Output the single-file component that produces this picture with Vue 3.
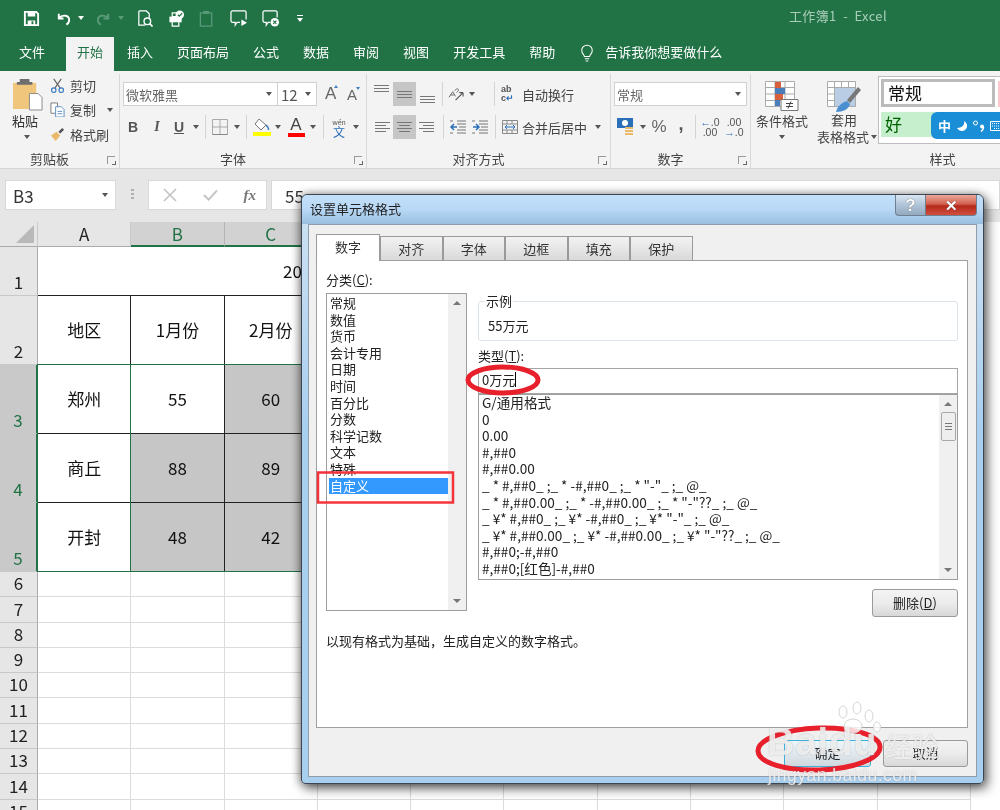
<template>
  <div class="excel">
    <!-- title bar -->
    <header class="qat">
      <svg class="q" viewBox="0 0 18 18"><path d="M2 2h12l2 2v12H2z" fill="none" stroke="#fff" stroke-width="2"/><path d="M5 2h8v5H5zM5 11h8v5H5z" fill="#fff"/><path d="M9 12h2v3H9z" fill="#217346"/></svg>
      <svg class="q undo" viewBox="0 0 18 18"><path d="M4 4v5h5M4 8.500c4-4 11-3 11 2 0 2-1 4-3 5" fill="none" stroke="#fff" stroke-width="2"/></svg>
      <i class="dd white"></i>
      <svg class="q redo" viewBox="0 0 18 18"><path d="M14 4v5H9M14 8.500c-4-4-11-3-11 2 0 2 1 4 3 5" fill="none" stroke="#5a9a78" stroke-width="2"/></svg>
      <i class="dd faded"></i>
      <svg class="q preview" viewBox="0 0 18 18"><path d="M3 1h8l3 3v5M3 1v15h7" fill="none" stroke="#fff" stroke-width="1.300"/><circle cx="12" cy="12" r="3.500" fill="none" stroke="#fff" stroke-width="1.500"/><path d="M14.500 14.500l3 3" stroke="#fff" stroke-width="1.800"/></svg>
      <svg class="q wide printer" viewBox="0 0 20 18"><path d="M3 7h13v6H3z" fill="#fff"/><path d="M6 3h6v4H6zM6 12h7v5H6z" fill="none" stroke="#fff" stroke-width="1.300"/><circle cx="14" cy="5" r="4.500" fill="#fff"/><path d="M12 5l1.500 1.500L16.500 3.500" fill="none" stroke="#217346" stroke-width="1.300"/></svg>
      <svg class="q wide" viewBox="0 0 20 18"><path d="M3 3h12v14H3z" fill="none" stroke="#5a9a78" stroke-width="1.400"/><path d="M6 1h6v3H6z" fill="#5a9a78"/></svg>
      <svg class="q wide" viewBox="0 0 20 18"><path d="M3 1h13a1.500 1.500 0 0 1 1.500 1.500V10M11 13H8l-2 3v-3H3a1.500 1.500 0 0 1-1.500-1.500v-9A1.500 1.500 0 0 1 3 1" fill="none" stroke="#fff" stroke-width="1.300"/><path d="M12.500 10l6 3.500-6 3.500z" fill="#fff"/></svg>
      <svg class="q wide" viewBox="0 0 20 18"><path d="M3 1h12a1.500 1.500 0 0 1 1.500 1.500V8M9 13H7l-2 3v-3H3a1.500 1.500 0 0 1-1.500-1.500v-9A1.500 1.500 0 0 1 3 1" fill="none" stroke="#fff" stroke-width="1.300"/><circle cx="14" cy="13" r="4.500" fill="#fff"/><path d="M12.300 11.300l3.400 3.400M15.700 11.300l-3.400 3.400" stroke="#217346" stroke-width="1.200"/></svg>
      <span class="more"><b></b><i class="dd white"></i></span>
      <span class="doc-title">工作簿1 &nbsp;-&nbsp; Excel</span>
    </header>

    <!-- tabs -->
    <nav class="tabs">
      <span v-for="t in tabs" :key="t" class="tab" :class="{ 'tab--on': t === '开始' }">{{ t }}</span>
      <svg class="bulb" viewBox="0 0 16 20"><path d="M5 13.500c0-2-3-3.500-3-7a6 6 0 0 1 12 0c0 3.500-3 5-3 7zM5.500 16h5M6.500 18.500h3" fill="none" stroke="#fff" stroke-width="1.200"/></svg>
      <span class="tell">告诉我你想要做什么</span>
    </nav>

    <!-- ribbon -->
    <section class="ribbon">
      <div class="group g-clip">
        <div class="clip-body">
          <div class="paste">
            <svg viewBox="0 0 32 34" class="paste-ic"><path d="M1 5h24v27H1z" fill="#f0c67c"/><path d="M8 1h10v3h3v3H5V4h3z" fill="#6f6f6f"/><path d="M18 16h9l4 4v13H18z" fill="#fff" stroke="#8a8a8a"/></svg>
            <span>粘贴</span>
            <i class="dd"></i>
          </div>
          <div class="clip-list">
            <div class="clip-row">
              <svg viewBox="0 0 16 16"><path d="M4 1l7 10M12 1L5 11" stroke="#666" stroke-width="1.300"/><circle cx="4" cy="13" r="2.400" fill="none" stroke="#3f7fbf" stroke-width="1.300"/><circle cx="12" cy="13" r="2.400" fill="none" stroke="#3f7fbf" stroke-width="1.300"/></svg>
              <span>剪切</span>
            </div>
            <div class="clip-row">
              <svg viewBox="0 0 16 16"><path d="M1 1h7v11H1z" fill="#fff" stroke="#777"/><path d="M6 5h6l3 3v8H6z" fill="#fff" stroke="#5b8dbd"/><path d="M8 10h5M8 12.500h5" stroke="#5b8dbd"/></svg>
              <span>复制</span>
              <i class="dd copy-dd"></i>
            </div>
            <div class="clip-row">
              <svg viewBox="0 0 16 16"><path d="M1 9l6-4 4 4-5 6z" fill="#eab96c"/><path d="M9 5l4-4 2 2-4 4z" fill="#555"/></svg>
              <span>格式刷</span>
            </div>
          </div>
        </div>
        <div class="g-label">剪贴板<i class="launch"></i></div>
      </div>

      <div class="group g-font">
        <div class="rows">
          <div class="row">
            <div class="combo font-name"><span>微软雅黑</span><i class="dd"></i></div>
            <div class="combo font-size"><span>12</span><i class="dd"></i></div>
            <span class="grow-a">A<sup class="up"></sup></span>
            <span class="grow-a small">A<sup class="down"></sup></span>
          </div>
          <div class="row row-2 font-tools">
            <b class="rb serif">B</b>
            <i class="rb serif it">I</i>
            <u class="rb u-btn">U</u>
            <i class="dd w14"></i>
            <em class="sep w6"></em>
            <span class="rb w24"><svg viewBox="0 0 16 16" width="16" height="16"><path d="M.500.500h15v15H.500zM8 .500v15M.500 8h15" fill="none" stroke="#aaa"/><path d="M.500 15.500h15" stroke="#888"/></svg></span>
            <i class="dd w10"></i>
            <em class="sep w10"></em>
            <span class="rb w22"><svg viewBox="0 0 18 20" width="18" height="20"><path d="M6 2l7 6-5 5-6-6z" fill="#fff" stroke="#777"/><path d="M13 8c2 2 3 3 2.500 5" fill="none" stroke="#3f7fbf" stroke-width="1.500"/><path d="M0 15h18v4H0z" fill="#ffff00"/></svg></span>
            <i class="dd w10"></i>
            <span class="rb w22 a-red">A</span>
            <i class="dd w12"></i>
            <em class="sep w10"></em>
            <span class="rb w22 wen"><small>wén</small><span>文</span></span>
            <i class="dd w12"></i>
          </div>
        </div>
        <div class="g-label">字体<i class="launch"></i></div>
      </div>

      <div class="group g-align">
        <div class="rows">
          <div class="row">
            <span v-for="(a, i) in alignTop" :key="i" class="al" :class="{ 'al--on': a.on, [a.cls]: true }"><s></s><s></s><s></s></span>
            <em class="sep w6"></em>
            <span class="rb w23"><svg viewBox="0 0 18 16" width="17" height="15"><path d="M1 11l4-6 3 5M2.500 8.500h4M7 4l2-2a1.500 1.500 0 0 1 2 2l-2 2" fill="none" stroke="#666"/><path d="M8 14L16 6M16 6h-4M16 6v4" fill="none" stroke="#555" stroke-width="1.200"/></svg></span>
            <i class="dd w8"></i>
            <em class="sep sep-wrap"></em>
            <span class="wrap-ic">ab<br>c<span>↵</span></span>
            <span class="rt">自动换行</span>
          </div>
          <div class="row row-2">
            <span class="al al-left"><s></s><s></s><s></s><s></s></span>
            <span class="al al-center al--on"><s></s><s></s><s></s><s></s></span>
            <span class="al al-right"><s></s><s></s><s></s><s></s></span>
            <em class="sep w8"></em>
            <span class="rb w22"><svg viewBox="0 0 16 14" width="16" height="14"><path d="M7 1h9M7 4h9M9 7h7M7 10h9M7 13h9M0 1h3M0 13h3" stroke="#777"/><path d="M7 7H1M4 4L1 7l3 3" fill="none" stroke="#2b6fb8" stroke-width="1.500"/></svg></span>
            <span class="rb w22"><svg viewBox="0 0 16 14" width="16" height="14"><path d="M7 1h9M7 4h9M9 7h7M7 10h9M7 13h9M0 1h3M0 13h3" stroke="#777"/><path d="M1 7h6M4 4l3 3-3 3" fill="none" stroke="#2b6fb8" stroke-width="1.500"/></svg></span>
            <em class="sep w6 ml1"></em>
            <span class="merge-ic"><svg viewBox="0 0 16 14" width="16" height="14"><path d="M.500.500h15v13H.500zM.500 4h15M.500 10h15M5 .500V4M10 .500V4M5 10v3.500M10 10v3.500" fill="none" stroke="#888"/><path d="M3 7h10M5 5L3 7l2 2M11 5l2 2-2 2" fill="none" stroke="#2b6fb8"/></svg></span>
            <span class="rt merge-t">合并后居中</span>
            <i class="dd merge-dd"></i>
          </div>
        </div>
        <div class="g-label">对齐方式<i class="launch"></i></div>
      </div>

      <div class="group g-num">
        <div class="rows">
          <div class="row">
            <div class="combo num-fmt"><span>常规</span><i class="dd"></i></div>
          </div>
          <div class="row row-2 num-tools">
            <span class="rb w20"><svg viewBox="0 0 18 18" width="18" height="18"><path d="M0 0h16v10H0z" fill="#2b6fb8"/><circle cx="8" cy="5" r="3" fill="#fff"/><path d="M8 9h8v2H8zM8 12h8v2H8zM8 15h8v2H8z" fill="#eab96c"/></svg></span>
            <i class="dd w14"></i>
            <span class="rb w20 pct">%</span>
            <span class="rb w20 comma">,</span>
            <em class="sep sep-num"></em>
            <span class="dec"><small><em>←</em>.0</small><small>.00</small></span>
            <span class="dec dec-2"><small>.00</small><small><em>→</em>.0</small></span>
          </div>
        </div>
        <div class="g-label">数字<i class="launch"></i></div>
      </div>

      <div class="group g-style">
        <div class="style-body">
          <div class="big cond">
            <svg viewBox="0 0 34 30" width="34" height="30"><path d="M.500.500h29v25H.500zM10 .500v25M20 .500v25M.500 6.500h29M.500 13h29M.500 19.500h29" fill="#fff" stroke="#aaa"/><path d="M10 1h6v6h-6z" fill="#d9603c"/><path d="M10 7h10v6H10z" fill="#4a7ebb"/><path d="M10 13h8v6h-8z" fill="#d9603c"/><path d="M10 19h5v6h-5z" fill="#4a7ebb"/><path d="M16 18.500h17v11H16z" fill="#fff" stroke="#777"/><path d="M21 22.500h7M21 25.500h7M26 20.500l-3 7" fill="none" stroke="#444"/></svg>
            <span>条件格式</span>
            <i class="dd"></i>
          </div>
          <div class="big tbl">
            <svg viewBox="0 0 34 32" width="34" height="32"><path d="M.500.500h28v25H.500zM7.500.500v25M14.500.500v25M21.500.500v25M.500 6.500h28M.500 13h28M.500 19.500h28" fill="#fff" stroke="#aaa"/><path d="M8 7h20v18H8z" fill="#b9cde4"/><path d="M20 19L31 6l3 3-11 13z" fill="#777"/><path d="M9 31c1-5 5-9 11-11l3 3c-1 5-7 8-14 8z" fill="#4a8fd0"/></svg>
            <span>套用</span>
            <span class="tbl-last">表格格式<i class="dd"></i></span>
          </div>
          <div class="gallery">
            <div class="st-normal">常规</div>
            <div class="st-good">好</div>
            <div class="st-pink"></div>
          </div>
        </div>
        <div class="g-label">样式</div>
      </div>

      <!-- IME floating bar -->
      <div class="ime">
        <span class="ime-zh">中</span>
        <svg viewBox="0 0 12 12" width="12" height="12"><path d="M8 1c1 4-2 7-7 7 2 3 5 4 8 2s3-7-1-9z" fill="#fff"/></svg>
        <svg viewBox="0 0 12 12" width="12" height="12"><circle cx="2.500" cy="3" r="2" fill="none" stroke="#fff"/><circle cx="9" cy="6.500" r="2" fill="#fff"/><path d="M10.500 7c0 2-1 3.500-2.500 4.500" fill="none" stroke="#fff" stroke-width="1.500"/></svg>
        <svg viewBox="0 0 16 10" width="16" height="10"><path d="M.500.500h15v9H.500z" fill="none" stroke="#fff"/><path d="M2 2.500h12M2 5h12M4 7.500h8" stroke="#fff" stroke-dasharray="1 1"/></svg>
      </div>
    </section>

    <!-- formula bar -->
    <section class="fbar">
      <div class="namebox"><span>B3</span><i class="dd"></i></div>
      <div class="dots"><s></s><s></s><s></s></div>
      <div class="fbtns">
        <svg viewBox="0 0 14 14" width="14" height="14"><path d="M1 1l12 12M13 1L1 13" stroke="#c3c3c3" stroke-width="1.600"/></svg>
        <svg viewBox="0 0 16 14" width="15" height="14"><path d="M1 7l5 5L15 2" fill="none" stroke="#c3c3c3" stroke-width="2"/></svg>
        <span class="fx">fx</span>
      </div>
      <div class="finput">55</div>
    </section>

    <!-- sheet -->
    <section class="sheet">
      <div class="corner"><b></b></div>
      <div v-for="c in columns" :key="c" class="col-h" :class="{ 'col-h--sel': c === 'B' || c === 'C' }">{{ c }}</div>
      <template v-for="r in rows" :key="r.n">
        <div class="row-h" :class="{ 'row-h--sel': r.sel }" :style="{ height: r.h + 'px' }">{{ r.n }}</div>
        <template v-if="r.n === 1">
          <div class="cell merged" :style="{ height: r.h + 'px' }"><span>20</span></div>
          <div v-for="k in 4" :key="k" class="cell plain-bottom" :style="{ height: r.h + 'px' }"></div>
        </template>
        <template v-else>
          <div
            v-for="(v, j) in r.cells"
            :key="j"
            class="cell"
            :class="{ 'cell--data': r.n <= 5 && j < 3, 'cell--gray': r.gray && r.gray.includes(j) }"
            :style="{ height: r.h + 'px' }"
          >{{ v }}</div>
        </template>
      </template>
      <div class="selection"></div>
    </section>

    <!-- dialog -->
    <div class="dialog">
      <div class="dlg-title">
        <span>设置单元格格式</span>
        <div class="dlg-btns">
          <button class="help">?</button>
          <button class="close">✕</button>
        </div>
      </div>
      <div class="dlg-inner">
        <div class="dlg-tabs">
          <span v-for="(t, i) in dlgTabs" :key="t" class="dlg-tab" :class="{ 'dlg-tab--on': i === 0 }">{{ t }}</span>
        </div>
        <div class="dlg-panel">
          <div class="panel-main">
            <div class="cat">
              <div class="lbl">分类(<u>C</u>):</div>
              <div class="cat-list">
                <div class="cat-items">
                  <div v-for="c in categories" :key="c" class="cat-item" :class="{ 'cat-item--on': c === '自定义' }">{{ c }}</div>
                </div>
                <div class="vscroll">
                  <i class="arr up"></i>
                  <i class="arr down"></i>
                </div>
              </div>
            </div>
            <div class="fmt">
              <fieldset class="sample">
                <legend>示例</legend>
                <div>55万元</div>
              </fieldset>
              <div class="lbl type-lbl">类型(<u>T</u>):</div>
              <div class="type-input">0万元<span class="caret"></span></div>
              <div class="type-list">
                <div class="type-items">
                  <div v-for="f in formats" :key="f" class="type-item">{{ f }}</div>
                </div>
                <div class="vscroll">
                  <i class="arr up"></i>
                  <span class="thumb"><s></s><s></s><s></s></span>
                  <i class="arr down"></i>
                </div>
              </div>
              <div class="del-row"><button class="w7btn">删除(<u>D</u>)</button></div>
            </div>
          </div>
          <p class="desc">以现有格式为基础，生成自定义的数字格式。</p>
        </div>
        <div class="dlg-foot">
          <button class="w7btn foot ok">确定</button>
          <button class="w7btn foot cancel">取消</button>
        </div>
      </div>
    </div>

    <!-- hand drawn marks -->
    <svg class="marks" viewBox="0 0 1000 810" width="1000" height="810">
      <ellipse cx="503" cy="380" rx="35" ry="13" fill="none" stroke="#e8202c" stroke-width="5"/>
      <rect x="318" y="472.500" width="135" height="30" fill="none" stroke="#f5333a" stroke-width="2.500"/>
      <ellipse cx="819" cy="749" rx="61" ry="21" fill="none" stroke="#e8202c" stroke-width="5" transform="rotate(-2 819 749)"/>
      <g fill="#fff" fill-opacity=".8" stroke="#d4d4d4">
        <ellipse cx="843" cy="712" rx="4" ry="6"/>
        <ellipse cx="857" cy="708" rx="4" ry="6"/>
        <ellipse cx="869" cy="716" rx="4" ry="6"/>
        <ellipse cx="877" cy="727" rx="3.500" ry="5"/>
        <ellipse cx="853" cy="726" rx="9" ry="7"/>
      </g>
    </svg>
    <div class="wm wm-baidu">Bai<span>du</span></div>
    <div class="wm wm-jy">经验</div>
    <div class="wm wm-url">jingyan.baidu.com</div>
  </div>
</template>

<script setup>
const tabs = ['文件', '开始', '插入', '页面布局', '公式', '数据', '审阅', '视图', '开发工具', '帮助']

const alignTop = [
  { cls: 'al-top', on: false },
  { cls: 'al-mid', on: true },
  { cls: 'al-bot', on: false },
]

const columns = ['A', 'B', 'C', 'D', 'E', 'F', 'G', 'H', 'I', 'J']
const blanks = (n) => Array.from({ length: n }, () => '')

const rows = [
  { n: 1, h: 49 },
  { n: 2, h: 69, cells: ['地区', '1月份', '2月份', ...blanks(7)] },
  { n: 3, h: 69, sel: true, gray: [2], cells: ['郑州', '55', '60', ...blanks(7)] },
  { n: 4, h: 69, sel: true, gray: [1, 2], cells: ['商丘', '88', '89', ...blanks(7)] },
  { n: 5, h: 69, sel: true, gray: [1, 2], cells: ['开封', '48', '42', ...blanks(7)] },
  ...[6, 7, 8, 9, 10, 11, 12, 13, 14, 15].map((n) => ({ n, h: 25.3, cells: blanks(10) })),
]

const dlgTabs = ['数字', '对齐', '字体', '边框', '填充', '保护']

const categories = ['常规', '数值', '货币', '会计专用', '日期', '时间', '百分比', '分数', '科学记数', '文本', '特殊', '自定义']

const formats = [
  'G/通用格式',
  '0',
  '0.00',
  '#,##0',
  '#,##0.00',
  '_ * #,##0_ ;_ * -#,##0_ ;_ * "-"_ ;_ @_',
  '_ * #,##0.00_ ;_ * -#,##0.00_ ;_ * "-"??_ ;_ @_',
  '_ ¥* #,##0_ ;_ ¥* -#,##0_ ;_ ¥* "-"_ ;_ @_',
  '_ ¥* #,##0.00_ ;_ ¥* -#,##0.00_ ;_ ¥* "-"??_ ;_ @_',
  '#,##0;-#,##0',
  '#,##0;[红色]-#,##0',
]
</script>

<style>
body { margin: 0; background: #fff; }
</style>

<style scoped>
.excel {
  position: relative;
  width: 1000px;
  height: 810px;
  overflow: hidden;
  background: #fff;
  color: #222;
  font-family: "Noto Sans CJK SC", "Liberation Sans", sans-serif;
  font-size: 13px;
  filter: blur(0.35px);
}

/* dropdown triangle */
.dd {
  display: inline-block;
  width: 0;
  height: 0;
  border-left: 3.5px solid transparent;
  border-right: 3.5px solid transparent;
  border-top: 4px solid #555;
  flex: none;
}
.dd.white { border-top-color: #fff; }
.dd.faded { border-top-color: #5a9a78; }

.qat {
  height: 36px;
  background: #217346;
  display: flex;
  align-items: center;
  padding-left: 23px;
  position: relative;
}
.q { width: 17px; height: 17px; flex: none; margin-right: 15px; }
.q.undo { margin-right: 6px; margin-left: 0; }
.q.redo { margin: 0 6px 0 11px; }
.q.preview { margin-left: 12px; margin-right: 13px; }
.q.wide { width: 20px; margin-right: 12px; }
.q.printer { margin-right: 11px; }
.more { display: inline-flex; flex-direction: column; align-items: center; gap: 2px; margin-left: 4px; }
.more b { width: 6px; height: 1px; background: #fff; }
.doc-title {
  position: absolute;
  left: 789px;
  top: 6px;
  color: #a9cdb9;
  font-size: 13px;
  letter-spacing: .35px;
}

.tabs {
  height: 35px;
  background: #217346;
  color: #fff;
  display: flex;
  align-items: stretch;
  padding-left: 7px;
}
.tab { padding: 2px 12px 0; line-height: 27px; white-space: nowrap; }
.tab:first-child { margin-right: 9px; }
.tab--on {
  background: #f3f3f3;
  color: #217346;
  padding: 2px 11px 0;
  margin-top: 1px;
  line-height: 25px;
  margin-right: 1px;
}
.bulb { width: 14px; height: 19px; margin: 8px 0 0 13px; }
.tell { margin-left: 11px; line-height: 31px; }

.ribbon {
  position: relative;
  height: 98px;
  background: #f3f3f3;
  display: flex;
  border-bottom: 1px solid #d4d4d4;
  box-sizing: border-box;
  color: #444;
}
.group {
  position: relative;
  display: flex;
  flex-direction: column;
  height: 94px;
  margin-top: 3px;
  border-right: 1px solid #d8d8d8;
  box-sizing: border-box;
}
.g-clip { width: 120px; }
.g-font { width: 247px; }
.g-align { width: 244px; }
.g-num { width: 140px; }
.g-style { width: 249px; border-right: 0; }
.g-label {
  position: absolute;
  left: 0;
  right: 0;
  top: 76px;
  height: 18px;
  line-height: 18px;
  text-align: center;
  padding-right: 20px;
  box-sizing: border-box;
}
.g-style .g-label { padding: 0 0 0 134px; }
.launch {
  position: absolute;
  right: 4px;
  top: 6px;
  width: 7px;
  height: 7px;
  border-left: 1px solid #999;
  border-top: 1px solid #999;
}
.launch::after {
  content: "";
  position: absolute;
  right: -1px;
  bottom: -1px;
  width: 3px;
  height: 3px;
  border-right: 1px solid #666;
  border-bottom: 1px solid #666;
}

.clip-body { display: flex; padding: 4px 0 0 12px; }
.paste { width: 34px; display: flex; flex-direction: column; align-items: flex-start; color: #333; }
.paste-ic { width: 31px; height: 33px; }
.paste span { line-height: 20px; }
.paste .dd { margin: 4px 0 0 12px; }
.clip-list { margin-left: 4px; margin-top: -5px; }
.clip-row { display: flex; align-items: center; height: 24.500px; position: relative; white-space: nowrap; }
.clip-row svg { width: 15px; height: 15px; margin-right: 5px; flex: none; }
.copy-dd { margin-left: 11px; }

.rows { display: flex; flex-direction: column; padding-top: 8px; }
.row { display: flex; align-items: center; height: 24px; position: relative; }
.row-2 { margin-top: 9px; }
.g-font .row:first-child { padding-left: 3px; }

.combo {
  display: flex;
  align-items: center;
  justify-content: space-between;
  box-sizing: border-box;
  height: 24px;
  background: #fff;
  border: 1px solid #d0d0d0;
  padding: 0 5px 0 2px;
  color: #666;
}
.font-name { width: 154px; border-right: 0; }
.font-size { width: 40px; color: #555; padding-left: 3px; font-size: 15px; }
.grow-a { font-size: 17px; margin-left: 8px; color: #666; position: relative; width: 11px; font-family: "Liberation Sans", sans-serif; }
.grow-a.small { font-size: 15px; margin-left: 11px; }
.grow-a sup {
  position: absolute;
  left: 9px;
  top: 1px;
  border-left: 2.500px solid transparent;
  border-right: 2.500px solid transparent;
}
.grow-a .up { border-bottom: 3px solid #3f7fbf; }
.grow-a .down { border-top: 3px solid #3f7fbf; }

.rb {
  display: inline-flex;
  align-items: center;
  justify-content: center;
  height: 24px;
  width: 24px;
  flex: none;
  text-decoration: none;
  font-style: normal;
}
.font-tools { padding-left: 1px; }
.serif { font-family: "Liberation Sans", sans-serif; font-size: 14px; color: #555; }
.rb.it { font-style: italic; font-family: "Liberation Serif", serif; font-weight: 700; }
.u-btn { width: 20px; font-family: "Liberation Sans", sans-serif; font-weight: 700; color: #555; font-size: 14px; text-decoration: underline; }
.w6 { width: 6px; }
.w8 { width: 8px; }
.w10 { width: 10px; }
.w12 { width: 12px; }
.w14 { width: 14px; }
.rb.w20 { width: 20px; }
.rb.w22 { width: 22px; }
.rb.w23 { width: 23px; }
.rb.w24 { width: 24px; }
i.dd.w14 { margin: 0 3.500px; width: 0; }
i.dd.w10 { margin: 0 1.500px; width: 0; }
i.dd.w12 { margin: 0 2.500px; width: 0; }
i.dd.w8 { margin: 0 .500px; width: 0; }

.sep {
  display: block;
  height: 24px;
  flex: none;
  position: relative;
}
.sep::after {
  content: "";
  position: absolute;
  left: 50%;
  top: 0;
  bottom: 0;
  width: 1px;
  background: #d4d4d4;
}
.ml1 { margin-left: 1px; }
.a-red {
  flex-direction: column;
  margin-left: 3px;
  font-family: "Liberation Sans", sans-serif;
  font-size: 17px;
  line-height: 15px;
  color: #444;
  position: relative;
}
.a-red::after { content: ""; width: 17px; height: 4px; background: #f00; margin-top: 1px; }
.wen { flex-direction: column; line-height: 10px; }
.wen small { font-size: 7px; color: #555; }
.wen span { font-size: 12px; color: #2b6fb8; }

.g-align .rows { padding-left: 3px; }
.al {
  width: 23px;
  height: 24px;
  flex: none;
  display: flex;
  flex-direction: column;
  align-items: center;
  justify-content: center;
  gap: 2px;
  box-sizing: border-box;
}
.al s { display: block; width: 15px; height: 1px; background: #777; }
.al--on { background: #c6c6c6; }
.al-top { justify-content: flex-start; padding-top: 3px; }
.al-bot { justify-content: flex-end; padding-bottom: 3px; }
.al-left { align-items: flex-start; padding-left: 5px; }
.al-right { align-items: flex-end; padding-right: 5px; }
.al-left s:nth-child(even), .al-right s:nth-child(even) { width: 11px; }
.al-center s:nth-child(even) { width: 11px; }
.sep-wrap { width: 6px; margin-left: 16px; }
.wrap-ic {
  width: 16px;
  margin-left: 4px;
  font: 700 9px/9px "Liberation Sans", sans-serif;
  color: #555;
}
.wrap-ic span { color: #2b6fb8; }
.rt { margin-left: 5px; white-space: nowrap; }
.merge-ic { margin-left: 4px; display: flex; flex: none; }
.merge-t { margin-left: 4px; }
.merge-dd { margin-left: 8px; }

.g-num .rows { padding-left: 3px; }
.num-fmt { width: 133px; }
.num-tools { margin-left: 2px; }
.pct { font-size: 17px; color: #666; font-family: "Liberation Sans", sans-serif; }
.comma { margin-left: 2px; font-size: 18px; font-weight: 700; color: #555; padding-bottom: 6px; box-sizing: border-box; font-family: "Liberation Sans", sans-serif; }
.sep-num { width: 6px; margin-left: 1px; }
.dec {
  width: 22px;
  margin-left: 1px;
  display: flex;
  flex-direction: column;
  align-items: center;
  font: 10px/10px "Liberation Sans", sans-serif;
  color: #555;
  flex: none;
}
.dec small { font-size: 10.500px; white-space: nowrap; }
.dec em { color: #2b6fb8; font-style: normal; font-weight: 700; }
.dec-2 { margin-left: 2px; }

.style-body { display: flex; padding-top: 7px; padding-left: 3px; }
.big { display: flex; flex-direction: column; align-items: center; line-height: 17px; white-space: nowrap; }
.big svg { flex: none; }
.cond { width: 56px; }
.cond span { margin-top: 1px; }
.cond .dd { margin-top: 6px; }
.tbl { width: 64px; margin-left: 2px; }
.tbl svg { margin-bottom: -2px; }
.tbl-last { display: inline-flex; align-items: center; gap: 2px; margin-left: 6px; }
.gallery {
  position: relative;
  flex: none;
  width: 122px;
  height: 68px;
  margin-top: -5px;
  margin-left: 2px;
  border: 1px solid #bdbdbd;
  border-right: 0;
  background: #fff;
  box-sizing: border-box;
  padding: 2px;
  overflow: hidden;
}
.st-normal {
  box-sizing: border-box;
  width: 114px;
  height: 28px;
  border: 3px solid #bcbcbc;
  background: #fff;
  color: #111;
  font-size: 17px;
  line-height: 21px;
  padding-left: 4px;
}
.st-good {
  width: 50px;
  height: 25px;
  margin-top: 5px;
  background: #c6efce;
  color: #006100;
  font-size: 17px;
  line-height: 24px;
  padding-left: 4px;
}
.st-pink {
  position: absolute;
  right: 0;
  top: 4px;
  width: 2px;
  height: 26px;
  background: #ffc7ce;
}
.ime {
  position: absolute;
  left: 931px;
  top: 41px;
  width: 78px;
  height: 27px;
  border-radius: 6px;
  background: #1a8fd8;
  color: #fff;
  display: flex;
  align-items: center;
  gap: 5px;
  padding-left: 7px;
  box-sizing: border-box;
}
.ime-zh { font-size: 13px; font-weight: 700; }

.fbar {
  height: 53px;
  box-sizing: border-box;
  background: #e6e6e6;
  padding: 11px 0 0 5px;
  display: flex;
  align-items: flex-start;
}
.namebox, .fbtns, .finput {
  height: 30px;
  background: #fff;
  border: 1px solid #d8d8d8;
  box-sizing: border-box;
  display: flex;
  align-items: center;
}
.namebox {
  width: 111px;
  justify-content: space-between;
  padding: 0 7px;
  font-size: 17px;
  color: #333;
}
.dots { width: 32px; display: flex; flex-direction: column; align-items: center; gap: 2px; padding-top: 9px; }
.dots s { width: 3px; height: 2px; background: #b0b0b0; display: block; }
.fbtns { width: 119px; padding: 0 10px 0 14px; justify-content: space-between; }
.fx { font: italic 700 15px "Liberation Serif", serif; color: #777; }
.finput { margin-left: 4px; flex: 1; padding-left: 13px; font-size: 17px; color: #333; }

.sheet {
  position: relative;
  display: grid;
  grid-template-columns: 38px repeat(10, 93.300px);
  grid-auto-rows: min-content;
}
.corner {
  height: 25px;
  background: #e6e6e6;
  border-right: 1px solid #c8c8c8;
  border-bottom: 1px solid #ababab;
  box-sizing: border-box;
  position: relative;
}
.corner b {
  position: absolute;
  right: 3px;
  bottom: 3px;
  border-left: 18px solid transparent;
  border-bottom: 18px solid #b9b9b9;
}
.col-h {
  height: 25px;
  box-sizing: border-box;
  background: #e6e6e6;
  border-right: 1px solid #c8c8c8;
  border-bottom: 1px solid #ababab;
  text-align: center;
  line-height: 23px;
  font-size: 17px;
}
.col-h--sel {
  background: #d2d2d2;
  color: #217346;
  border-bottom: 2px solid #217346;
  border-right-color: #b4b4b4;
}
.row-h {
  box-sizing: border-box;
  background: #e6e6e6;
  border-right: 1px solid #ababab;
  border-bottom: 1px solid #c8c8c8;
  display: flex;
  align-items: flex-end;
  justify-content: center;
  font-size: 17px;
  line-height: 24px;
  padding-bottom: 1px;
}
.row-h--sel {
  background: #c9c9c9;
  color: #217346;
  border-right: 2px solid #217346;
}
.cell {
  box-sizing: border-box;
  background: #fff;
  border-right: 1px solid #dcdcdc;
  border-bottom: 1px solid #dcdcdc;
  display: flex;
  align-items: center;
  justify-content: center;
  font-size: 17px;
  color: #111;
  padding-bottom: 2px;
}
.cell--data { border-right-color: #222; border-bottom-color: #222; }
.cell--gray { background: #c6c6c6; }
.merged {
  border-right: 0;
  grid-column: span 6;
  border-bottom-color: #222;
  justify-content: flex-start;
  padding: 0 0 2px 245px;
}
.plain-bottom { border-right: 0; }
.selection {
  position: absolute;
  left: 37px;
  top: 142px;
  width: 300px;
  height: 208px;
  border: 1.500px solid #217346;
  box-sizing: border-box;
  pointer-events: none;
}
.selection::before {
  content: "";
  position: absolute;
  left: 92px;
  top: 0;
  bottom: 0;
  border-left: 1.500px solid #217346;
}

.dialog {
  position: absolute;
  left: 301px;
  top: 194px;
  width: 683px;
  height: 590px;
  box-sizing: border-box;
  border: 1px solid #3d4650;
  border-radius: 6px 6px 4px 4px;
  background: linear-gradient(180deg, #cfe2f3 0%, #a9cfef 40%, #a9cfef 100%);
  box-shadow: 3px 4px 12px rgba(0, 0, 0, .65), -2px 0 8px rgba(0, 0, 0, .3);
  display: flex;
  flex-direction: column;
  padding: 0 6px 6px;
}
.dlg-title {
  height: 29px;
  flex: none;
  display: flex;
  justify-content: space-between;
  font-size: 13px;
  color: #222;
  line-height: 28px;
  margin: 0 -6px;
  padding: 0 6px 0 8px;
  background: linear-gradient(180deg, #c3e0fa 0%, #b8d8f6 50%, #99bfe0 100%);
  border-radius: 6px 6px 0 0;
}
.dlg-btns { display: flex; height: 21px; }
.dlg-btns button {
  height: 21px;
  border: 1px solid #6f7f90;
  border-top: 0;
  padding: 0;
  font-family: "Liberation Sans", sans-serif;
  line-height: 19px;
}
.help {
  width: 30px;
  border-right: 0 !important;
  border-radius: 0 0 0 4px;
  background: linear-gradient(180deg, #d9e6f2 0%, #b0c4d8 50%, #93aabf 100%);
  color: #fff;
  font-size: 17px;
  font-weight: 700;
  text-shadow: 0 0 1px #333;
}
.close {
  width: 52px;
  border-radius: 0 0 4px 0;
  background: linear-gradient(180deg, #e9a79b 0%, #d2614f 45%, #b5281a 55%, #d04f3e 100%);
  color: #fff;
  font-size: 15px;
  font-weight: 700;
  text-shadow: 0 0 1px #333;
}
.dlg-inner {
  flex: 1;
  background: #f0f0f0;
  border: 1px solid #8e9cab;
  display: flex;
  flex-direction: column;
  padding: 9px 8px 0 7px;
  box-sizing: border-box;
  min-height: 0;
}
.dlg-tabs { display: flex; height: 26px; flex: none; position: relative; z-index: 1; }
.dlg-tab {
  width: 62.500px;
  height: 24px;
  margin-top: 2px;
  box-sizing: border-box;
  border: 1px solid #9a9a9a;
  border-bottom: 0;
  background: linear-gradient(180deg, #f2f2f2 0%, #e6e6e6 50%, #d9d9d9 100%);
  text-align: center;
  line-height: 23px;
  color: #333;
}
.dlg-tab--on {
  width: 64px;
  height: 27px;
  margin-top: 0;
  background: #fff;
  line-height: 24px;
}
.dlg-panel {
  height: 468px;
  flex: none;
  background: #fff;
  border: 1px solid #a0a0a0;
  box-sizing: border-box;
  padding: 0 9px;
  color: #222;
}
.panel-main { display: flex; gap: 11px; }
.lbl { line-height: 18px; }
.cat { width: 141px; flex: none; padding-top: 10px; }
.cat-list {
  height: 318px;
  margin-top: 4px;
  box-sizing: border-box;
  border: 1px solid #9e9e9e;
  display: flex;
  overflow: hidden;
}
.cat-items { flex: 1; padding: 1px 0 0 2px; min-width: 0; }
.cat-item { height: 16.600px; line-height: 16.600px; white-space: nowrap; padding-left: 1px; }
.cat-item--on { background: #3399ff; color: #fff; }
.vscroll {
  width: 18px;
  flex: none;
  background: #f0f0f0;
  display: flex;
  flex-direction: column;
  align-items: center;
  position: relative;
  padding: 7px 0;
  box-sizing: border-box;
}
.arr {
  display: block;
  border-left: 4px solid transparent;
  border-right: 4px solid transparent;
  flex: none;
}
.arr.up { border-bottom: 4px solid #777; }
.arr.down { border-top: 4px solid #777; margin-top: auto; }
.thumb {
  width: 15px;
  height: 29px;
  margin-top: 6px;
  box-sizing: border-box;
  border: 1px solid #a8a8a8;
  border-radius: 2px;
  background: #eee;
  display: flex;
  flex-direction: column;
  align-items: center;
  justify-content: center;
  gap: 2px;
}
.thumb s { display: block; width: 7px; height: 1px; background: #777; }
.fmt { flex: 1; min-width: 0; padding-top: 32px; }
.sample {
  margin: 0;
  padding: 0 9px;
  height: 48px;
  box-sizing: border-box;
  border: 1px solid #dde3ea;
  border-radius: 3px;
  line-height: 20px;
}
.sample legend { padding: 0 1px; margin-left: -3px; line-height: 16px; font-size: 13px; }
.sample div { margin-top: 7px; }
.type-lbl { margin-top: 6px; margin-bottom: 1px; }
.type-input {
  height: 26px;
  margin-top: 3px;
  box-sizing: border-box;
  border: 1px solid #a6a6a6;
  padding: 0 0 3px 3px;
  line-height: 20px;
  display: flex;
  align-items: center;
}
.caret { width: 1px; height: 15px; background: #000; margin-left: 0; }
.type-list {
  height: 186px;
  box-sizing: border-box;
  border: 1px solid #9e9e9e;
  display: flex;
  overflow: hidden;
}
.type-items { flex: 1; padding: 0 0 0 3px; min-width: 0; margin-top: -1px; }
.type-item { height: 16.600px; line-height: 16.600px; font-size: 13.600px; white-space: pre; }
.del-row { display: flex; justify-content: flex-end; margin-top: 9px; }
.w7btn {
  width: 86px;
  height: 28px;
  box-sizing: border-box;
  border: 1px solid #9a9a9a;
  border-radius: 3px;
  background: linear-gradient(180deg, #f3f3f3 0%, #ececec 50%, #d8d8d8 100%);
  font: 13px "Noto Sans CJK SC", "Liberation Sans", sans-serif;
  color: #222;
  padding: 0 0 2px;
}
.desc { margin: 15px 0 0; line-height: 18px; }
.dlg-foot { display: flex; justify-content: flex-end; gap: 12px; margin-top: 12px; }
.foot { height: 27px; }
.ok { width: 87px; border-color: #3fb0dc; background: linear-gradient(180deg, #ecf6fb 0%, #e2e9ee 50%, #cfd8de 100%); }
.cancel { width: 85px; }

.marks { position: absolute; left: 0; top: 0; pointer-events: none; }
.wm {
  position: absolute;
  color: rgba(255, 255, 255, .75);
  text-shadow: 0 0 1.500px rgba(150, 150, 150, .7);
  font-family: "Liberation Sans", sans-serif;
  white-space: nowrap;
  pointer-events: none;
}
.wm-baidu { left: 767px; top: 722px; font-size: 38px; font-weight: 700; line-height: 40px; letter-spacing: 1px; }
.wm-jy { left: 885px; top: 730px; font-size: 27px; line-height: 32px; font-family: "Noto Sans CJK SC", sans-serif; }
.wm-url { left: 768px; top: 764px; font-size: 17.500px; line-height: 22px; letter-spacing: .5px; }
</style>
